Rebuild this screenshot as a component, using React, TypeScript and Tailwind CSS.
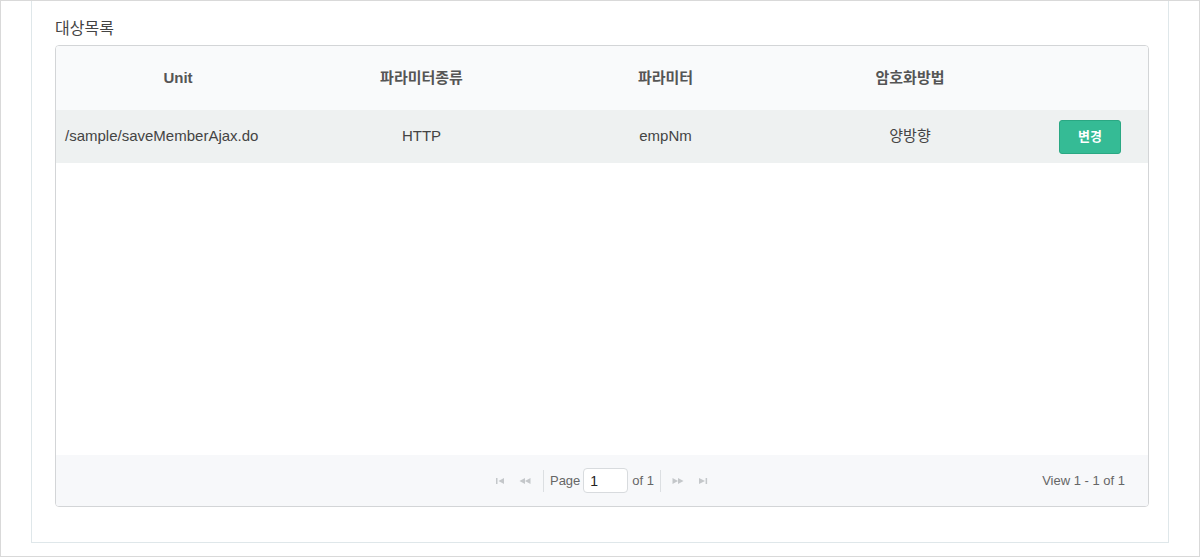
const font = "font-['Liberation_Sans','Noto_Sans_CJK_KR',sans-serif]"

const columns = [
  { label: "Unit", width: "w-[244px]" },
  { label: "파라미터종류", width: "w-[243px]" },
  { label: "파라미터", width: "w-[245px]" },
  { label: "암호화방법", width: "w-[244px]" },
  { label: "", width: "flex-1" },
]

const rows = [
  { unit: "/sample/saveMemberAjax.do", type: "HTTP", param: "empNm", method: "양방향" },
]

const PagerIcon = ({ kind }: { kind: "first" | "prev" | "next" | "last" }) => (
  <svg width="12" height="8" viewBox="0 0 12 8" className="block fill-[#c4c7ca]">
    {kind === "first" && (
      <>
        <rect x="1" y="1" width="1.5" height="6" />
        <polygon points="9,1 3.5,4 9,7" />
      </>
    )}
    {kind === "prev" && (
      <>
        <polygon points="6,1 0.5,4 6,7" />
        <polygon points="11.5,1 6,4 11.5,7" />
      </>
    )}
    {kind === "next" && (
      <>
        <polygon points="0.5,1 6,4 0.5,7" />
        <polygon points="6,1 11.5,4 6,7" />
      </>
    )}
    {kind === "last" && (
      <>
        <polygon points="2,1 8,4 2,7" />
        <rect x="8.6" y="1" width="1.5" height="6" />
      </>
    )}
  </svg>
)

const App = () => {
  return (
    <div className={`h-[557px] w-[1200px] overflow-hidden border border-[#d9d9d9] bg-white ${font}`}>
      <div className="ml-[30px] h-[542px] w-[1138px] border-x border-b border-[#dfe7ea] pl-[23px]">
        <h2 className="pt-[17px] text-[16px] leading-[22px] text-[#444]">대상목록</h2>

        <div className="mt-[5px] flex h-[462px] w-[1094px] flex-col overflow-hidden rounded-[4px] border border-[#d3d5d7] bg-white">
          <div className="flex h-[64px] shrink-0 items-center bg-[#f9fafb]">
            {columns.map((col, i) => (
              <div
                key={i}
                className={`${col.width} text-center text-[15px] font-bold text-[#555]`}
              >
                {col.label}
              </div>
            ))}
          </div>

          {rows.map((row) => (
            <div key={row.unit} className="flex h-[53px] shrink-0 items-center bg-[#eef1f1] text-[15px] text-[#444]">
              <div className="w-[244px] pl-[9px]">{row.unit}</div>
              <div className="w-[243px] text-center">{row.type}</div>
              <div className="w-[245px] text-center">{row.param}</div>
              <div className="w-[244px] text-center">{row.method}</div>
              <div className="flex flex-1 justify-center">
                <button className="h-[34px] w-[62px] rounded-[3px] border border-[#2aa883] bg-[#35bb95] text-[13px] font-bold text-white">
                  변경
                </button>
              </div>
            </div>
          ))}

          <div className="flex-1" />

          <div className="relative flex h-[51px] shrink-0 items-center justify-center bg-[#f7f8fa] text-[13px] text-[#666]">
            <div className="flex items-center">
              <span><PagerIcon kind="first" /></span>
              <span className="ml-[12px]"><PagerIcon kind="prev" /></span>
              <span className="ml-[12px] mr-[6px] h-[22px] w-px bg-[#dcdfe2]" />
              <span className="mr-[3px]">Page</span>
              <input
                defaultValue="1"
                className="h-[25px] w-[45px] rounded-[4px] border border-[#d8dbde] bg-white px-[6px] text-[14px] text-[#222] outline-none"
              />
              <span className="ml-[4px]">of 1</span>
              <span className="ml-[6px] mr-[11px] h-[22px] w-px bg-[#dcdfe2]" />
              <span><PagerIcon kind="next" /></span>
              <span className="ml-[13px]"><PagerIcon kind="last" /></span>
            </div>
            <div className="absolute right-[23px] text-[13px] text-[#666]">View 1 - 1 of 1</div>
          </div>
        </div>
      </div>
    </div>
  )
}

export default App
